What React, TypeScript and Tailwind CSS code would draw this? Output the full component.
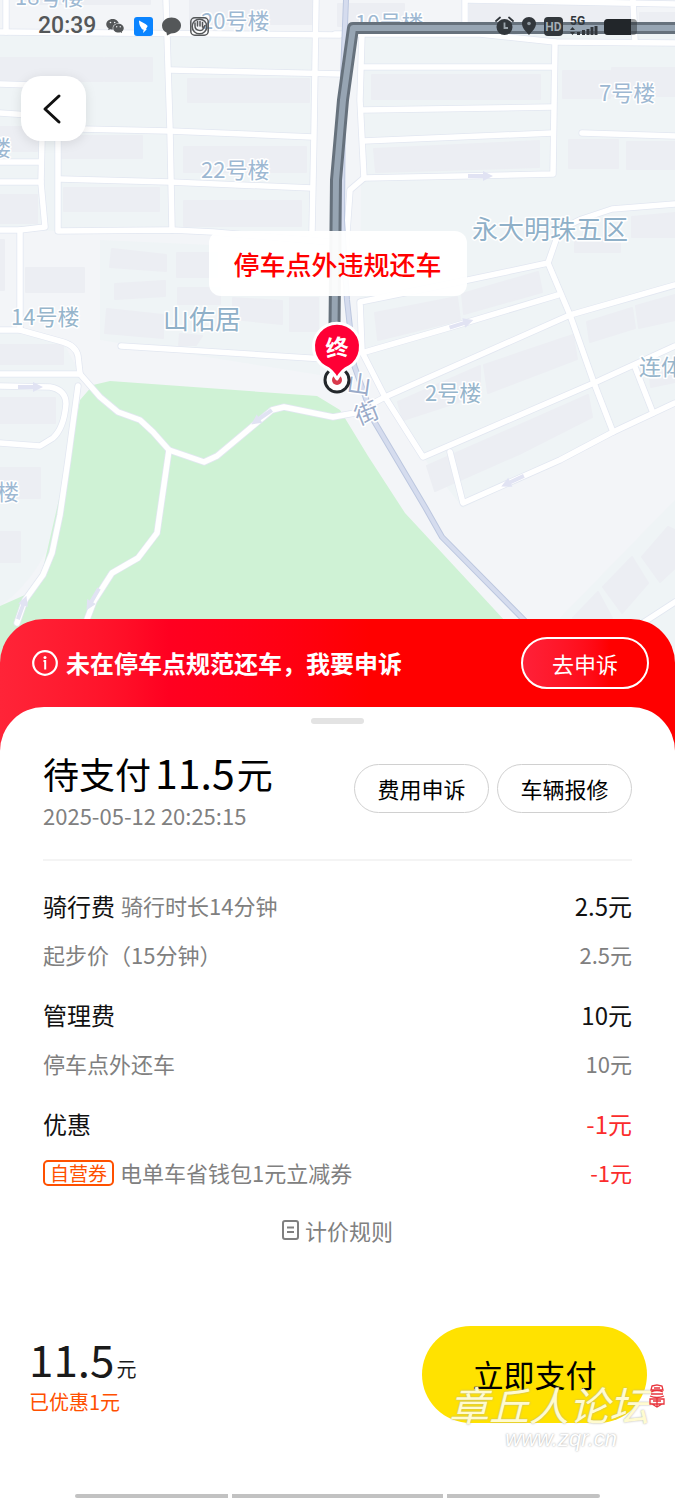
import React from "react";
import { AiFillWechat } from "react-icons/ai";

const ROADS = [
  "M0 32L340 35",
  "M6 0V32",
  "M166 0L168 67L170 130L172 230",
  "M316 0L315 67L314 133L312 232",
  "M170 70L342 74",
  "M80 129L170 131L313 137",
  "M60 179L170 182L312 188",
  "M58 130V231L172 230L213 232L330 242",
  "M42 138L41 183L45 227L20 230H0",
  "M0 84L30 85M0 113L30 115M0 162H41M0 182H41",
  "M20 230V330",
  "M0 330H20L63 342Q76 346 78 356L80 374L100 397L118 412L140 420L153 432L169 450L204 462L217 456L272 410L284 407L333 417L355 413L385 397L570 315L675 285",
  "M0 374H80",
  "M0 386L50 387Q66 390 66 404Q64 428 53 438L40 446L0 443",
  "M78 386L68 460L60 515L52 553L43 575L25 600L17 623",
  "M169 450L157 533L138 558L112 573L94 601L86 622",
  "M121 346L325 359",
  "M362 33L360 100L364 178L350 190L345 260",
  "M335 34H480L555 42L675 43",
  "M363 67H553M362 110L553 107M363 141L553 133",
  "M364 178L553 174L555 42",
  "M633 0L635 42M465 0V32M468 0L675 4",
  "M582 133L675 136",
  "M675 204L612 209L582 219Q560 228 556 240L548 263L468 280L360 302L362 352L385 397L423 457L594 383L675 346",
  "M548 263L570 315L594 383L613 432",
  "M365 352L448 328L558 295",
  "M635 367L653 413",
  "M675 403L613 432L560 460L463 503L450 452",
  "M675 602L635 628",
];

const BUILDINGS = [
  "M0 58h103v23H0zM105 58h47v23h-47zM188 79h121v23h-121zM62 136h80v22h-80z",
  "M184 147h122v25h-122zM64 188h95v23h-95zM184 201h117v25h-117z",
  "M0 127h37v24H0zM0 195h37v28H0zM20 0h130v4H20zM190 0h122v24h-122z",
  "M338 4h66v22h-66zM470 5h161v24h-161zM640 13h35v20h-35z",
  "M372 75h168v24h-168zM374 149L539 141V167L376 172z",
  "M563 71h47v27h-47zM612 68h63v28h-63zM569 140h49v28h-49zM627 142h48v27h-48z",
  "M632 217L675 213V237H632zM575 240h45v12h-45z",
  "M375 313L457 297L460 320L378 340zM462 294L538 272L542 292L464 314z",
  "M587 322L632 308L635 328L590 342zM636 306L675 295V320L639 328z",
  "M398 402L480 366V395L403 420zM484 365L573 335L577 359L488 393z",
  "M427 466L588 395L592 417L519 454L435 491z",
  "M650 377L675 368V382L651 387z",
  "M668 527L642 557L660 582L675 568V530zM632 557L603 587L622 613L648 583zM598 592L573 618H612z",
  "M112 249L166 255V271L110 267zM177 253h40v24h-40zM115 284L165 281V296L115 299zM178 288h42v16h-42z",
  "M107 309L163 315V338L105 333zM180 334L202 336L196 345H179z",
  "M26 268h58v24H26zM0 240h4v50H0zM0 345h63v19H0zM0 398h55v25H0z",
  "M233 298L282 301V324L233 319zM290 298h28v33h-28zM0 468h40v30H0zM0 532h20v30H0z",
];

const LABELS = [
  { text: "18号楼", x: 15, y: 5, size: 22, tone: "#9db8d2" },
  { text: "20号楼", x: 201, y: 29, size: 22, tone: "#9db8d2" },
  { text: "10号楼", x: 355, y: 31, size: 22, tone: "#9db8d2" },
  { text: "22号楼", x: 201, y: 178, size: 22, tone: "#9db8d2" },
  { text: "7号楼", x: 599, y: 101, size: 22, tone: "#9db8d2" },
  { text: "14号楼", x: 11, y: 325, size: 22, tone: "#96b5cb" },
  { text: "2号楼", x: 425, y: 401, size: 22, tone: "#96b5cb" },
  { text: "连体楼", x: 639, y: 375, size: 22, tone: "#96b5cb" },
  { text: "楼", x: -11, y: 156, size: 22, tone: "#9db8d2" },
  { text: "楼", x: -3, y: 500, size: 22, tone: "#9db8d2" },
  { text: "永大明珠五区", x: 472, y: 239, size: 26, tone: "#8fb0c8" },
  { text: "山佑居", x: 163, y: 329, size: 26, tone: "#8fb0c8" },
];

const ARROWS = [
  "translate(30 387)",
  "translate(480 176)",
  "translate(461 324) rotate(-18)",
  "translate(262 417) rotate(145)",
  "translate(513 481) rotate(155)",
  "translate(93 599) rotate(120)",
  "translate(22 608) rotate(-70)",
];

function MapCanvas() {
  return (
    <svg
      className="absolute inset-0 h-full w-full"
      viewBox="0 0 675 679"
      preserveAspectRatio="xMidYMin slice"
      role="img"
      aria-label="还车位置地图"
    >
      <rect width="675" height="700" fill="#f3f5f8" />
      <g fill="#eff4f6">
        <path d="M0 34H312V232L58 231L0 229z" />
        <path d="M100 240L320 250V375L100 340z" />
        <path d="M362 34H675V403L463 508L423 457L360 350z" />
        <path d="M0 330L63 342L80 374V400L62 500Q50 570 0 606z" />
        <path d="M675 500L560 618V700H675z" />
      </g>
      <path
        fill="#cff2d5"
        d="M93 385L110 381L317 396L340 410L368 456L405 513L506 622V700H0V606L25 595Q40 585 45 560L68 460L80 400z"
      />
      <g fill="#eceef3" stroke="#eceef3" strokeWidth="2" strokeLinejoin="round">
        {BUILDINGS.map((d) => (
          <path key={d} d={d} />
        ))}
      </g>
      <g fill="none" strokeLinejoin="round" strokeLinecap="round">
        <g stroke="#e2e7f1" strokeWidth="7">
          {ROADS.map((d) => (
            <path key={d} d={d} />
          ))}
        </g>
        <g stroke="#ffffff" strokeWidth="5.500">
          {ROADS.map((d) => (
            <path key={d} d={d} />
          ))}
        </g>
        <path d="M346 0L343 75L342 220L347 300L354 365L374 421L425 507L442 537L530 626" stroke="#bcc7df" strokeWidth="6" />
        <path d="M346 0L343 75L342 220L347 300L354 365L374 421L425 507L442 537L530 626" stroke="#d5dcee" strokeWidth="4" />
      </g>
      {ARROWS.map((t) => (
        <path key={t} transform={t} d="M-12 -2H3V-5L13 0L3 5V2H-12z" fill="#e1e3f3" />
      ))}
      <g
        fontFamily='"Noto Sans CJK SC", sans-serif'
        stroke="#ffffff"
        strokeWidth="3"
        strokeLinejoin="round"
        paintOrder="stroke"
      >
        {LABELS.map((l) => (
          <text key={l.text + l.y} x={l.x} y={l.y} fontSize={l.size} fill={l.tone}>
            {l.text}
          </text>
        ))}
        <g fontSize="24" fill="#9aabc9" textAnchor="middle">
          <text transform="translate(358 393) rotate(8)">山</text>
          <text transform="translate(370 421) rotate(-22)">街</text>
        </g>
      </g>
      <g fill="none" strokeLinejoin="round">
        <path d="M700 28H353L343 100L336 180L334 376" stroke="#66717c" strokeWidth="12" />
        <path d="M700 28H353L343 100L336 180L334 376" stroke="#97a5b3" strokeWidth="6" />
      </g>
      <circle cx="337" cy="380" r="12" fill="#ffffff" stroke="#23272b" strokeWidth="3" />
      <circle cx="337" cy="380" r="5" fill="#d93a4c" />
      <path
        d="M337 379Q332 370 325 367A23.500 23.500 0 1 1 349 367Q342 370 337 379z"
        fill="#ff0035"
        stroke="#ffffff"
        strokeWidth="3"
        strokeLinejoin="round"
      />
      <text
        transform="translate(338 356) rotate(-6)"
        fontSize="23"
        fontWeight="700"
        textAnchor="middle"
        fill="#ffffff"
        fontFamily='"Noto Sans CJK SC", sans-serif'
      >
        终
      </text>
    </svg>
  );
}

function StatusBar() {
  return (
    <div className="relative flex h-[52px] items-center justify-between px-[38px] text-[#545759]">
      <div className="flex items-center gap-[9px]">
        <time className="font-[Roboto] text-[23px] leading-[28px] font-medium">20:39</time>
        <AiFillWechat className="size-5" aria-hidden="true" />
        <svg className="size-[19px]" viewBox="0 0 19 19" aria-hidden="true">
          <rect width="19" height="19" rx="3" fill="#0a84ff" />
          <path d="M5 3.500C8 5 11.500 6.500 13.700 9L12 12L12.800 12.300L9 16L9.700 12.800C8 12.500 7.500 11.500 7 10.500C5.500 8.500 5 6 5 3.500z" fill="#fff" />
        </svg>
        <svg className="size-[19px]" viewBox="0 0 19 19" aria-hidden="true">
          <path fill="currentColor" d="M9.500 0.500C4.500 0.500 0 4 0 8.500C0 12 2 14.500 4.500 15.500L5 18.500L9 16.500C14.500 16.500 19 13 19 8.500C19 4 14.500 0.500 9.500 0.500z" />
        </svg>
        <svg className="size-[19px]" viewBox="0 0 19 19" fill="none" stroke="currentColor" strokeWidth="1.500" aria-hidden="true">
          <rect x="0.800" y="0.800" width="17.400" height="17.400" rx="4" />
          <circle cx="9.500" cy="9.500" r="7.300" />
          <path d="M5 9V6M7.500 9V4.500M10 9V4.500M12.500 10V5.500M5 9C5 14 13 15 13.500 11L15 8.500" strokeLinecap="round" />
        </svg>
      </div>
      <svg className="h-5 w-[144px]" viewBox="-2 0 144 20" aria-hidden="true">
        <g fill="#32373c">
          <circle cx="9.500" cy="11" r="8" />
          <path d="M1 5L5 1.500M14 1.500L18 5" stroke="#32373c" strokeWidth="1.800" strokeLinecap="round" />
          <path d="M9.500 6.500V12H13" stroke="#9aa3ab" strokeWidth="1.800" fill="none" />
          <path d="M34 1C29.800 1 27 4 27 7.500C27 12 31 15.500 34 19C37 15.500 41 12 41 7.500C41 4 38 1 34 1z" />
          <circle cx="34" cy="7.500" r="1.800" fill="#8d969e" />
          <rect x="49" y="1" width="19" height="19" rx="4" />
          <text x="58.500" y="15" fontSize="12" fontWeight="700" textAnchor="middle" fill="#a4adb5" fontFamily="Roboto, sans-serif">
            HD
          </text>
          <text x="75" y="9" fontSize="12" fontWeight="700" fontFamily="Roboto, sans-serif">
            5G
          </text>
          <path d="M75 14L77.500 11L80 14zM75 16L77.500 19L80 16zM82 16h3v3h-3zM87 14h3v5h-3zM91.500 13h3v6h-3zM95.500 11h3v8h-3zM99.500 10h3v9h-3z" />
          <rect x="109" y="3" width="33" height="16" rx="4" fillOpacity="0.500" />
          <path d="M113 3H136V19H113A4 4 0 0 1 109 15V7A4 4 0 0 1 113 3z" fill="#22262a" />
        </g>
      </svg>
    </div>
  );
}

type LineProps = { label: React.ReactNode; amount: string; discount?: boolean };

function MainLine({ label, amount, discount }: LineProps) {
  return (
    <div className="flex h-[49px] items-center justify-between text-2xl text-[#111111]">
      <dt className="flex items-center gap-1.5">{label}</dt>
      <dd className={discount ? "text-[#fb2c2c]" : ""}>{amount}</dd>
    </div>
  );
}

function SubLine({ label, amount, discount }: LineProps) {
  return (
    <div className="flex h-[49px] items-center justify-between text-[22px] text-[#808080]">
      <dt className="flex items-center gap-1.5">{label}</dt>
      <dd className={discount ? "text-[#fb2c2c]" : ""}>{amount}</dd>
    </div>
  );
}

function Watermark() {
  return (
    <div className="pointer-events-none absolute top-[54px] right-[10px] flex items-start">
      <div className="text-right italic">
        <div className="text-[40px] leading-[48px] text-[#fffbd0] [text-shadow:0_0_2px_#a8a8a8]">
          章丘人论坛
        </div>
        <div className="pr-8 font-['Liberation_Sans'] text-[22px] leading-[22px] text-white [text-shadow:0_0_2px_#999999]">
          www.zqr.cn
        </div>
      </div>
      <svg className="mt-1 h-6 w-4" viewBox="0 0 16 24" fill="none" stroke="#e8343c" strokeWidth="1.300" aria-hidden="true">
        <path d="M3 2L8 0.800L13 2L14 6H2zM2 8Q8 5 14 8M1 12Q8 15 15 12M2 10H14M1 15H15V20H1zM4 17H12M8 14V23M3 20L8 23L13 20M5 4H11" />
      </svg>
    </div>
  );
}

export default function App() {
  return (
    <main className="flex min-h-screen flex-col bg-white [font-family:'Noto_Sans_CJK_SC',sans-serif]">
      <section className="relative h-[679px] overflow-hidden">
        <MapCanvas />
        <StatusBar />
        <button
          type="button"
          aria-label="返回"
          className="relative mt-6 ml-[21px] flex size-[65px] items-center justify-center rounded-[20px] bg-white shadow-[0_2px_12px_rgba(0,0,0,0.1)]"
        >
          <svg className="size-8" viewBox="0 0 32 32" fill="none" stroke="#111" strokeWidth="3" strokeLinecap="round" strokeLinejoin="round" aria-hidden="true">
            <path d="M21 3L7 16L21 29" />
          </svg>
        </button>
        <div className="absolute top-[231px] left-1/2 -translate-x-1/2 rounded-xl bg-white/95 px-[25px] text-[26px] leading-[65px] font-medium whitespace-nowrap text-[#ff0000]">
          停车点外违规还车
        </div>
      </section>

      <section className="relative -mt-[60px] flex grow flex-col rounded-t-[44px] bg-linear-to-r from-[#ff2438] via-[#ff0020] via-25% to-[#ff0000] to-55%">
        <div className="flex h-[88px] items-center justify-between pr-[26px] pl-8 text-white">
          <p className="flex items-center gap-2 text-2xl font-bold">
            <svg className="size-[26px]" viewBox="0 0 26 26" fill="none" stroke="currentColor" strokeWidth="2.200" aria-hidden="true">
              <circle cx="13" cy="13" r="11.800" />
              <path d="M11.500 11H13.200V19.500" strokeWidth="2" />
              <circle cx="13" cy="7.500" r="1.500" fill="currentColor" stroke="none" />
            </svg>
            未在停车点规范还车，我要申诉
          </p>
          <button
            type="button"
            className="h-[52px] w-32 rounded-full border-2 border-white bg-linear-to-r from-[#ff2038] to-[#ff0000] to-70% text-[22px]"
          >
            去申诉
          </button>
        </div>

        <div className="flex grow flex-col rounded-t-[44px] bg-white pt-[11px]">
          <div className="mx-auto h-1.5 w-[53px] rounded-full bg-[#e3e3e3]" />
          <div className="px-[43px]">
            <header className="mt-[22px] flex justify-between border-b-2 border-[#f4f4f4] pb-[27px]">
              <div>
                <h1 className="flex h-[52px] items-baseline gap-0.5 text-4xl leading-[50px] text-black">
                  待支付<span className="ml-0.5 text-[41px] leading-[50px]">11.5</span>元
                </h1>
                <p className="text-[22px] leading-[34px] text-[#808080]">2025-05-12 20:25:15</p>
              </div>
              <div className="mt-[18px] flex gap-2 text-[22px] text-black">
                <button type="button" className="h-[49px] w-[135px] rounded-full border border-[#d0d0d0]">
                  费用申诉
                </button>
                <button type="button" className="h-[49px] w-[135px] rounded-full border border-[#d0d0d0]">
                  车辆报修
                </button>
              </div>
            </header>

            <dl className="mt-5 flex flex-col gap-[11px]">
              <div>
                <MainLine
                  label={
                    <>
                      骑行费<span className="text-[22px] text-[#808080]">骑行时长14分钟</span>
                    </>
                  }
                  amount="2.5元"
                />
                <SubLine label="起步价（15分钟）" amount="2.5元" />
              </div>
              <div>
                <MainLine label="管理费" amount="10元" />
                <SubLine label="停车点外还车" amount="10元" />
              </div>
              <div>
                <MainLine label="优惠" amount="-1元" discount />
                <SubLine
                  label={
                    <>
                      <span className="rounded-[5px] border-2 border-[#ff5000] px-[5px] text-[19px] leading-[22px] text-[#ff5000]">
                        自营券
                      </span>
                      电单车省钱包1元立减券
                    </>
                  }
                  amount="-1元"
                  discount
                />
              </div>
            </dl>

            <button type="button" className="mx-auto mt-[17px] flex items-center gap-1.5 text-[22px] leading-8 text-[#808080]">
              <svg className="h-5 w-[17px]" viewBox="0 0 17 20" fill="none" stroke="currentColor" strokeWidth="2" aria-hidden="true">
                <rect x="1" y="1" width="15" height="18" rx="2" />
                <path d="M5 7.500H12M5 12H12" />
              </svg>
              计价规则
            </button>
          </div>

          <footer className="relative mt-20 flex items-start justify-between pr-7 pl-[29px]">
            <div className="pt-2.5">
              <p className="flex h-[51px] items-baseline gap-0.5 text-[44px] leading-[44px] text-[#1a1a1a]">
                11.5<span className="text-xl leading-5">元</span>
              </p>
              <p className="text-xl leading-[30px] text-[#ff5000]">已优惠1元</p>
            </div>
            <button type="button" className="h-[97px] w-[225px] rounded-full bg-[#ffe200] text-[31px] text-black">
              立即支付
            </button>
            <Watermark />
          </footer>

          <div className="mt-auto flex gap-1 px-[75px] pb-0.5" aria-hidden="true">
            <div className="h-1 flex-[153] rounded-l-full bg-[#c2c2c2]" />
            <div className="h-1 flex-[211] bg-[#c2c2c2]" />
            <div className="h-1 flex-[153] rounded-r-full bg-[#c2c2c2]" />
          </div>
        </div>
      </section>
    </main>
  );
}
